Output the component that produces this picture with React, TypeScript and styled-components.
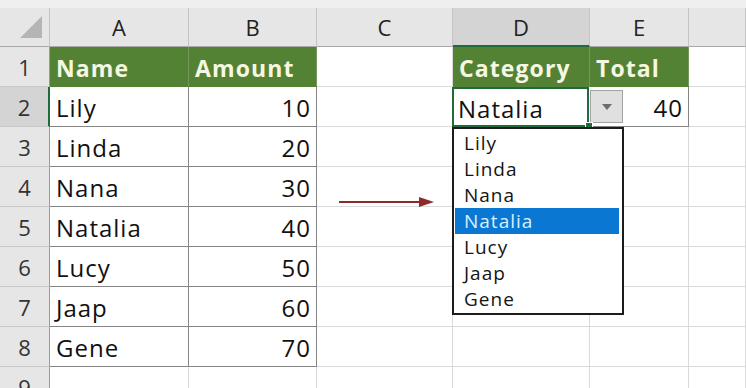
import React from 'react';
import styled, { createGlobalStyle, css } from 'styled-components';

const GlobalStyle = createGlobalStyle`
  html, body {
    margin: 0;
    padding: 0;
    background: #ffffff;
    overflow: hidden;
  }
  body {
    font-family: 'Open Sans', 'Noto Sans', sans-serif;
  }
`;

const WIDTHS = { head: 50, A: 139, B: 128, C: 136, D: 137, E: 99 };
const GREEN = '#548235';
const SELECT_GREEN = '#1f6b3b';

const people = [
  { name: 'Lily', amount: 10 },
  { name: 'Linda', amount: 20 },
  { name: 'Nana', amount: 30 },
  { name: 'Natalia', amount: 40 },
  { name: 'Lucy', amount: 50 },
  { name: 'Jaap', amount: 60 },
  { name: 'Gene', amount: 70 },
];

type Variant = 'grid' | 'data' | 'title';

export default function App() {
  return (
    <>
      <GlobalStyle />
      <Sheet>
        <HeaderRow>
          <Corner>
            <svg width="24" height="24" viewBox="0 0 24 24">
              <polygon points="23,1 23,23 1,23" fill="#b5b5b5" />
            </svg>
          </Corner>
          <ColHead $w={WIDTHS.A}>A</ColHead>
          <ColHead $w={WIDTHS.B}>B</ColHead>
          <ColHead $w={WIDTHS.C}>C</ColHead>
          <ColHead $w={WIDTHS.D} $active>D</ColHead>
          <ColHead $w={WIDTHS.E}>E</ColHead>
          <ColHead />
        </HeaderRow>

        <Row>
          <RowHead>1</RowHead>
          <Cell $w={WIDTHS.A} $variant="title">Name</Cell>
          <Cell $w={WIDTHS.B} $variant="title">Amount</Cell>
          <Cell $w={WIDTHS.C} $variant="grid" />
          <Cell $w={WIDTHS.D} $variant="title">Category</Cell>
          <Cell $w={WIDTHS.E} $variant="title">Total</Cell>
          <Cell $variant="grid" />
        </Row>

        {people.map((p, i) => (
          <Row key={p.name}>
            <RowHead $active={i === 0}>{i + 2}</RowHead>
            <Cell $w={WIDTHS.A} $variant="data">{p.name}</Cell>
            <Cell $w={WIDTHS.B} $variant="data" $right>{p.amount}</Cell>
            <Cell $w={WIDTHS.C} $variant="grid" />
            {i === 0 ? (
              <ActiveCell $w={WIDTHS.D}>
                Natalia
                <DropButton>
                  <svg width="10" height="6" viewBox="0 0 10 6">
                    <polygon points="0,0 10,0 5,6" fill="#6d6d6d" />
                  </svg>
                </DropButton>
                <FillHandle />
                <ListBox>
                  {people.map((o) => (
                    <ListItem key={o.name} $selected={o.name === 'Natalia'}>
                      {o.name}
                    </ListItem>
                  ))}
                </ListBox>
              </ActiveCell>
            ) : (
              <Cell $w={WIDTHS.D} $variant="grid" />
            )}
            {i === 0 ? (
              <Cell $w={WIDTHS.E} $variant="data" $right>40</Cell>
            ) : (
              <Cell $w={WIDTHS.E} $variant="grid" />
            )}
            <Cell $variant="grid" />
          </Row>
        ))}

        <Row>
          <RowHead>9</RowHead>
          <Cell $w={WIDTHS.A} $variant="grid" />
          <Cell $w={WIDTHS.B} $variant="grid" />
          <Cell $w={WIDTHS.C} $variant="grid" />
          <Cell $w={WIDTHS.D} $variant="grid" />
          <Cell $w={WIDTHS.E} $variant="grid" />
          <Cell $variant="grid" />
        </Row>

        <Arrow width="96" height="14" viewBox="0 0 96 14">
          <line x1="0" y1="7" x2="82" y2="7" stroke="#8e2a2a" strokeWidth="2" />
          <polygon points="80,2 95,7 80,12" fill="#8e2a2a" />
        </Arrow>
      </Sheet>
    </>
  );
}

const Sheet = styled.div`
  position: relative;
  padding-top: 8px;
  background: #efefef;
  width: 746px;
  height: 388px;
  overflow: hidden;
  color: #111;
`;

const HeaderRow = styled.div`
  display: flex;
  height: 39px;
  background: #e6e6e6;
`;

const Corner = styled.div`
  box-sizing: border-box;
  flex: 0 0 ${WIDTHS.head}px;
  display: flex;
  align-items: flex-end;
  justify-content: flex-end;
  padding: 0 6px 7px 0;
  border-right: 1px solid #c4c4c4;
  border-bottom: 1px solid #a9a9a9;
`;

const ColHead = styled.div<{ $w?: number; $active?: boolean }>`
  box-sizing: border-box;
  flex: ${(p) => (p.$w ? `0 0 ${p.$w}px` : '1 1 auto')};
  display: flex;
  align-items: center;
  justify-content: center;
  font-size: 22px;
  color: #222;
  border-right: 1px solid #c4c4c4;
  border-bottom: 1px solid #a9a9a9;
  ${(p) =>
    p.$active &&
    css`
      background: #d4d4d4;
      border-bottom: 2px solid ${SELECT_GREEN};
    `}
`;

const Row = styled.div`
  display: flex;
  height: 40px;
  background: #ffffff;
`;

const RowHead = styled.div<{ $active?: boolean }>`
  box-sizing: border-box;
  flex: 0 0 ${WIDTHS.head}px;
  display: flex;
  align-items: center;
  justify-content: center;
  font-size: 22px;
  color: #333;
  background: #e6e6e6;
  border-right: 1px solid #9a9a9a;
  border-bottom: 1px solid #c8c8c8;
  ${(p) =>
    p.$active &&
    css`
      background: #d4d4d4;
      border-right: 2px solid ${SELECT_GREEN};
    `}
`;

const variants = {
  grid: css`
    border-right: 1px solid #dadada;
    border-bottom: 1px solid #dadada;
  `,
  data: css`
    border-right: 1px solid #858585;
    border-bottom: 1px solid #858585;
    font-size: 24px;
    letter-spacing: 1px;
  `,
  title: css`
    background: ${GREEN};
    color: #f6f7e2;
    font-weight: 700;
    font-size: 23px;
    letter-spacing: 1.1px;
    border-right: 1px solid #76985e;
    border-bottom: 1px solid ${GREEN};
  `,
};

const Cell = styled.div<{ $w?: number; $variant: Variant; $right?: boolean }>`
  box-sizing: border-box;
  flex: ${(p) => (p.$w ? `0 0 ${p.$w}px` : '1 1 auto')};
  display: flex;
  align-items: center;
  justify-content: ${(p) => (p.$right ? 'flex-end' : 'flex-start')};
  padding: 2px 5px 0 6px;
  white-space: nowrap;
  ${(p) => variants[p.$variant]}
`;

const ActiveCell = styled.div<{ $w: number }>`
  box-sizing: border-box;
  position: relative;
  flex: 0 0 ${(p) => p.$w}px;
  display: flex;
  align-items: center;
  padding: 2px 6px 0 6px;
  margin-left: -1px;
  margin-right: 1px;
  font-size: 24px;
  letter-spacing: 1px;
  box-shadow: inset 0 0 0 2px ${SELECT_GREEN};
  z-index: 2;
`;

const DropButton = styled.div`
  box-sizing: border-box;
  position: absolute;
  left: calc(100% + 1px);
  top: 3px;
  width: 33px;
  height: 33px;
  display: flex;
  align-items: center;
  justify-content: center;
  background: #e0e0e0;
  border: 1px solid #a3a3a3;
`;

const FillHandle = styled.div`
  position: absolute;
  right: -4px;
  bottom: -3px;
  width: 6px;
  height: 6px;
  background: ${SELECT_GREEN};
  border: 1px solid #ffffff;
`;

const ListBox = styled.div`
  box-sizing: border-box;
  position: absolute;
  top: 100%;
  left: 0;
  width: 172px;
  padding: 1px 3px 1px 1px;
  background: #ffffff;
  border: 2px solid #1c1c1c;
  z-index: 3;
`;

const ListItem = styled.div<{ $selected?: boolean }>`
  height: 26px;
  display: flex;
  align-items: center;
  padding-left: 9px;
  font-size: 19px;
  letter-spacing: 1px;
  color: #141414;
  ${(p) =>
    p.$selected &&
    css`
      background: #0a78d2;
      color: #d6f0ff;
    `}
`;

const Arrow = styled.svg`
  position: absolute;
  left: 339px;
  top: 195px;
`;
